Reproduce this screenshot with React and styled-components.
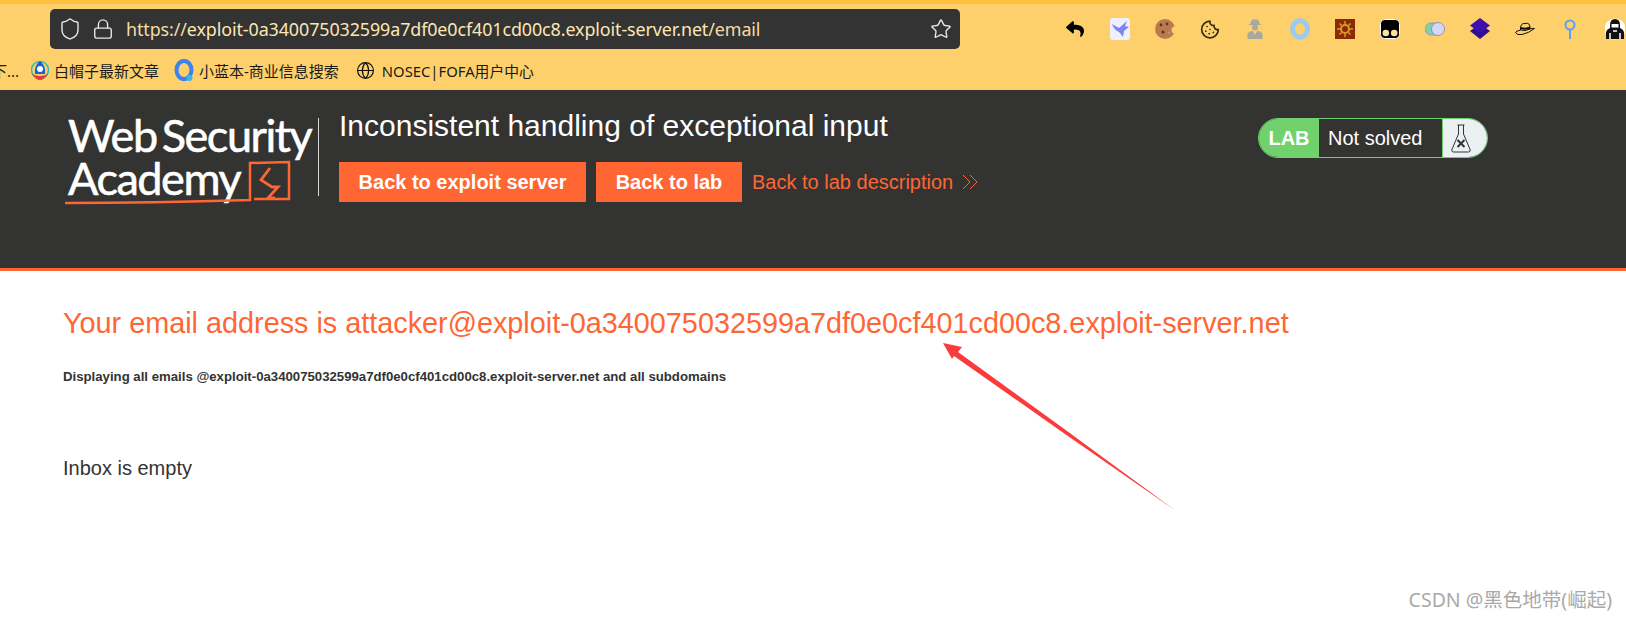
import React from "react";
import styled, { createGlobalStyle } from "styled-components";
import { Shield, Lock, Star, Cookie, Globe } from "lucide-react";
import { FaReply } from "react-icons/fa";

const orange = "#ff6633";
const dark = "#333332";
const green = "#70d16d";
const email = "exploit-0a340075032599a7df0e0cf401cd00c8.exploit-server.net";

const GlobalStyle = createGlobalStyle`
  html, body {
    margin: 0;
    padding: 0;
    background: #fff;
    font-family: "Liberation Sans", Arial, sans-serif;
  }
`;

const Page = styled.div`
  position: relative;
  width: 1626px;
  height: 619px;
  overflow: hidden;
`;

const Chrome = styled.div`
  height: 86px;
  background: #fdd06c;
  border-top: 4px solid #fdc13d;
`;

const AddressRow = styled.div`
  display: flex;
  align-items: center;
  height: 50px;
  padding-left: 50px;
`;

const AddressBar = styled.div`
  display: flex;
  align-items: center;
  width: 910px;
  height: 40px;
  margin-top: -1px;
  padding: 0 8px;
  box-sizing: border-box;
  background: #333333;
  border-radius: 5px;
  color: #e8e8e8;
`;

const LockWrap = styled.span`
  display: flex;
  margin-left: 10px;
  margin-right: 12px;
`;

const Url = styled.span`
  flex: 1;
  font-family: "Noto Sans", sans-serif;
  font-size: 17.9px;
  letter-spacing: -0.1px;
  color: #f2dca6;
  white-space: nowrap;
`;

const UrlHost = styled.span`
  color: #fbe7b5;
`;

const ToolIcons = styled.div`
  display: flex;
  align-items: center;
  gap: 25px;
  margin-left: 105px;
`;

const ToolIcon = styled.span`
  display: flex;
  align-items: center;
  justify-content: center;
  width: 20px;
  height: 20px;
`;

const Bookmarks = styled.div`
  display: flex;
  align-items: center;
  height: 33px;
  font-family: "Noto Sans", "Noto Sans CJK SC", sans-serif;
  font-size: 15px;
  color: #1a1a1a;
  white-space: nowrap;
`;

const CutBookmark = styled.span`
  width: 22px;
  margin-left: -8px;
  margin-right: 17px;
`;

const Bookmark = styled.span`
  display: flex;
  align-items: center;
  gap: ${(p) => p.$gap || 5}px;
  margin-right: ${(p) => p.$after || 15}px;
`;

const BookmarkLatin = styled.span`
  font-size: 14.8px;
`;

const Header = styled.header`
  display: flex;
  height: 178px;
  padding: 0 138px 0 68px;
  background: ${dark};
  border-bottom: 3px solid ${orange};
`;

const Logo = styled.div`
  position: relative;
  width: 250px;
  height: 100px;
  margin-top: 24px;
  font-family: Lato, sans-serif;
  font-size: 45px;
  line-height: 43px;
  letter-spacing: -1.45px;
  word-spacing: -5px;
  -webkit-text-stroke: 0.6px #fff;
  color: #fff;
  white-space: nowrap;
`;

const LogoMark = styled.svg`
  position: absolute;
  left: -6px;
  top: 44px;
`;

const Divider = styled.div`
  width: 1px;
  height: 78px;
  margin: 28px 20px 0 0;
  background: #d8d8d8;
`;

const TitleBlock = styled.div`
  padding-top: 19px;
`;

const Title = styled.h2`
  margin: 0 0 19px;
  font-size: 30px;
  font-weight: 400;
  line-height: 34px;
  color: #fff;
`;

const Actions = styled.div`
  display: flex;
  align-items: center;
  gap: 10px;
`;

const ActionButton = styled.a`
  display: flex;
  align-items: center;
  justify-content: center;
  width: ${(p) => p.$width}px;
  height: 40px;
  background: ${orange};
  color: #fff;
  font-size: 20px;
  font-weight: 700;
`;

const BackLink = styled.a`
  display: flex;
  align-items: center;
  gap: 9px;
  color: ${orange};
  font-size: 20px;
`;

const LabBadge = styled.div`
  display: flex;
  align-self: flex-start;
  width: 230px;
  height: 40px;
  margin: 28px 0 0 auto;
  border-radius: 20px;
  overflow: hidden;
  box-sizing: border-box;
  border: 1px solid ${green};
  color: #fff;
  font-size: 20px;
`;

const LabTag = styled.div`
  display: flex;
  align-items: center;
  justify-content: center;
  width: 60px;
  background: ${green};
  font-weight: 700;
`;

const LabStatus = styled.div`
  display: flex;
  align-items: center;
  width: 123px;
  padding-left: 9px;
  box-sizing: border-box;
  background: ${dark};
`;

const LabIcon = styled.div`
  display: flex;
  flex: 1;
  align-items: center;
  justify-content: center;
  padding-right: 8px;
  background: #ebf0f2;
  border-left: 1px solid ${green};
`;

const Content = styled.main`
  padding: 0 63px;
`;

const EmailHeading = styled.h4`
  margin: 35px 0 0;
  font-size: 28.8px;
  font-weight: 400;
  line-height: 34px;
  color: ${orange};
  white-space: nowrap;
`;

const EmailNote = styled.h6`
  margin: 29px 0 0;
  font-size: 13.2px;
  font-weight: 700;
  line-height: 16px;
  color: ${dark};
`;

const Inbox = styled.p`
  margin: 71px 0 0;
  font-size: 20px;
  line-height: 24px;
  color: ${dark};
`;

const ArrowMark = styled.svg`
  position: absolute;
  left: 930px;
  top: 335px;
`;

const Watermark = styled.div`
  position: absolute;
  right: 14px;
  bottom: 6px;
  font-family: "Noto Sans", "Noto Sans CJK SC", sans-serif;
  font-size: 19.5px;
  color: #a9a9a9;
`;

const Envelope = () => (
  <svg width="20" height="22" viewBox="0 0 20 22">
    <rect x="0" y="0" width="20" height="22" rx="3" fill="#eef0ff" />
    <path d="M2 6 L9 10 L17 3 L15 8 L19 9 L14 13 L13 19 L9 14 Q4 12 2 6 Z" fill="#7d86f0" />
  </svg>
);

const BrownCookie = () => (
  <svg width="20" height="22" viewBox="0 0 20 22">
    <circle cx="10" cy="11" r="10" fill="#b97a4e" />
    <circle cx="20" cy="12" r="3.5" fill="#fdd06c" />
    <circle cx="6" cy="7" r="1.4" fill="#5c3620" />
    <circle cx="12" cy="6" r="1.4" fill="#5c3620" />
    <circle cx="8" cy="14" r="1.6" fill="#5c3620" />
    <circle cx="14" cy="15" r="1.3" fill="#d9828a" />
  </svg>
);

const Spy = () => (
  <svg width="16" height="20" viewBox="0 0 16 20" fill="#a8a8a0">
    <path d="M3 5 L5 0.500 L11 0.500 L13 5 L15 6 L1 6 Z" />
    <circle cx="8" cy="8.500" r="3" />
    <path d="M0.500 20 L0.500 15 Q2 12 6 12 L8 16 L10 12 Q14 12 15.500 15 L15.500 20 Z" />
  </svg>
);

const Ring = () => (
  <svg width="20" height="22" viewBox="0 0 20 22">
    <ellipse cx="10" cy="11" rx="7.500" ry="8.300" fill="none" stroke="#9ccbf2" strokeWidth="5" />
  </svg>
);

const SunBox = () => (
  <svg width="20" height="20" viewBox="0 0 20 20">
    <rect width="20" height="20" fill="#8c2a05" />
    <circle cx="10" cy="10" r="4" fill="none" stroke="#d69a2d" strokeWidth="2" />
    <path d="M10 2v3M10 15v3M2 10h3M15 10h3M4.500 4.500l2 2M13.500 13.500l2 2M15.500 4.500l-2 2M6.500 13.500l-2 2" stroke="#d69a2d" strokeWidth="1.500" />
  </svg>
);

const Tamper = () => (
  <svg width="20" height="20" viewBox="0 0 20 20">
    <rect x="0.500" y="0.500" width="19" height="19" rx="4" fill="#000" stroke="#fff" />
    <circle cx="5.800" cy="14" r="3.300" fill="#fde0a0" />
    <circle cx="14.200" cy="14" r="3.300" fill="#fde0a0" />
  </svg>
);

const ToggleExt = () => (
  <svg width="20" height="16" viewBox="0 0 20 16">
    <rect x="0" y="2" width="18" height="12" rx="6" fill="#7fcfb0" stroke="#9a9ab8" />
    <circle cx="13" cy="8" r="6.500" fill="#d5d8f5" stroke="#9a8fc0" />
  </svg>
);

const Layers = () => (
  <svg width="20" height="22" viewBox="0 0 20 22">
    <path d="M10 6 L20 13 L10 21 L0 13 Z" fill="#2d0f8f" />
    <path d="M10 0 L20 7.500 L10 15 L0 7.500 Z" fill="#3f10ad" />
  </svg>
);

const Hat = () => (
  <svg width="20" height="14" viewBox="0 0 20 14" fill="none" stroke="#111" strokeWidth="1">
    <path d="M5.500 8 Q5 1 10 1.500 Q15.500 0 15 7" fill="#fdd06c" />
    <path d="M5.500 6 Q11 7.500 15 5.500" strokeWidth="2" />
    <path d="M5.500 8 Q1 9 0.500 10.500 Q2 13.500 7 12.500 Q14 11 19.500 6.500 Q17 6 15 7 Q10 9.500 5.500 8 Z" fill="#fdd06c" />
  </svg>
);

const Pin = () => (
  <svg width="12" height="20" viewBox="0 0 12 20" fill="none" stroke="#5aa0ee" strokeWidth="2">
    <circle cx="6" cy="6" r="4.500" />
    <path d="M6 10.500 V20" />
  </svg>
);

const Hacker = () => (
  <svg width="20" height="22" viewBox="0 0 20 22">
    <circle cx="10" cy="11" r="10.500" fill="#fff" />
    <path d="M10 1 Q15 1 15 7 L15 10 Q18 11 19 14 L19 21 L1 21 L1 14 Q2 11 5 10 L5 7 Q5 1 10 1 Z" fill="#111" />
    <rect x="6.500" y="6" width="7" height="3.500" fill="#fff" />
    <path d="M5 21 V15 M15 21 V15 M8 13 H12" stroke="#fff" strokeWidth="1.500" />
  </svg>
);

const Bell = () => (
  <svg width="18" height="22" viewBox="0 0 18 22">
    <circle cx="9" cy="10" r="8.500" fill="none" stroke="#27c0b0" strokeWidth="1.500" />
    <path d="M9 1 Q15 5 14 14 L4 14 Q3 5 9 1 Z" fill="#1d5fd0" />
    <path d="M1 14 Q9 26 17 14 Q9 18 1 14 Z" fill="#e23b3b" />
    <circle cx="9" cy="9" r="3" fill="#fff" />
  </svg>
);

const BlueQ = () => (
  <svg width="20" height="24" viewBox="0 0 20 24" fill="none">
    <ellipse cx="10" cy="11" rx="7.500" ry="9" stroke="#3b82f0" strokeWidth="4" />
    <circle cx="15.500" cy="19" r="3" fill="#38b8e8" />
  </svg>
);

const Flask = () => (
  <svg width="20" height="29" viewBox="0 0 20 29" fill="none" stroke="#333" strokeLinejoin="round">
    <path d="M6.500 1 H13.500 M7.500 1 V10 L0.700 26 Q0.700 28 2.500 28 H17.500 Q19.300 28 19.300 26 L12.500 10 V1" strokeWidth="1" />
    <path d="M6.500 16 L13.500 23 M13.500 16 L6.500 23" strokeWidth="2" />
  </svg>
);

const Chevrons = () => (
  <svg width="17" height="16" viewBox="0 0 17 16" fill="none" stroke={orange} strokeWidth="1">
    <path d="M1 1 L8 8 L1 15 M8 1 L15 8 L8 15" />
  </svg>
);

const WebSecurityLogo = () => (
  <Logo>
    Web Security
    <br />
    Academy
    <LogoMark width="240" height="50" viewBox="0 0 240 50" fill="none" stroke={orange} strokeWidth="2.500">
      <path d="M3 45 Q90 45 188 42 L188 5 L227 4 L227 41 L192 41" />
      <path d="M208 10 L199 22 L210 29 L216 29 L206 40 L213 40" strokeWidth="2.800" />
    </LogoMark>
  </Logo>
);

export default function App() {
  return (
    <Page>
      <GlobalStyle />
      <Chrome>
        <AddressRow>
          <AddressBar>
            <Shield size={24} strokeWidth={1.4} />
            <LockWrap>
              <Lock size={22} strokeWidth={1.5} />
            </LockWrap>
            <Url>
              https://<UrlHost>{email}</UrlHost>/email
            </Url>
            <Star size={22} strokeWidth={1.5} />
          </AddressBar>
          <ToolIcons>
            <ToolIcon><FaReply size={18} color="#000" /></ToolIcon>
            <ToolIcon><Envelope /></ToolIcon>
            <ToolIcon><BrownCookie /></ToolIcon>
            <ToolIcon><Cookie size={23} color="#332a15" strokeWidth={2} /></ToolIcon>
            <ToolIcon><Spy /></ToolIcon>
            <ToolIcon><Ring /></ToolIcon>
            <ToolIcon><SunBox /></ToolIcon>
            <ToolIcon><Tamper /></ToolIcon>
            <ToolIcon><ToggleExt /></ToolIcon>
            <ToolIcon><Layers /></ToolIcon>
            <ToolIcon><Hat /></ToolIcon>
            <ToolIcon><Pin /></ToolIcon>
            <ToolIcon><Hacker /></ToolIcon>
          </ToolIcons>
        </AddressRow>
        <Bookmarks>
          <CutBookmark>下...</CutBookmark>
          <Bookmark><Bell />白帽子最新文章</Bookmark>
          <Bookmark $after={17}><BlueQ />小蓝本-商业信息搜索</Bookmark>
          <Bookmark $gap={7}>
            <Globe size={19} color="#111" strokeWidth={1.5} />
            <BookmarkLatin>NOSEC|FOFA用户中心</BookmarkLatin>
          </Bookmark>
        </Bookmarks>
      </Chrome>
      <Header>
        <WebSecurityLogo />
        <Divider />
        <TitleBlock>
          <Title>Inconsistent handling of exceptional input</Title>
          <Actions>
            <ActionButton $width={247}>Back to exploit server</ActionButton>
            <ActionButton $width={146}>Back to lab</ActionButton>
            <BackLink>Back to lab description <Chevrons /></BackLink>
          </Actions>
        </TitleBlock>
        <LabBadge>
          <LabTag>LAB</LabTag>
          <LabStatus>Not solved</LabStatus>
          <LabIcon><Flask /></LabIcon>
        </LabBadge>
      </Header>
      <Content>
        <EmailHeading>Your email address is attacker@{email}</EmailHeading>
        <EmailNote>Displaying all emails @{email} and all subdomains</EmailNote>
        <Inbox>Inbox is empty</Inbox>
      </Content>
      <ArrowMark width="250" height="180" viewBox="0 0 250 180">
        <path d="M13 8 L32 12 L28 17 L137 96 L246 176 L135 99 L24 21 L22 24 Z" fill="#fb3b3b" />
      </ArrowMark>
      <Watermark>CSDN @黑色地带(崛起)</Watermark>
    </Page>
  );
}
